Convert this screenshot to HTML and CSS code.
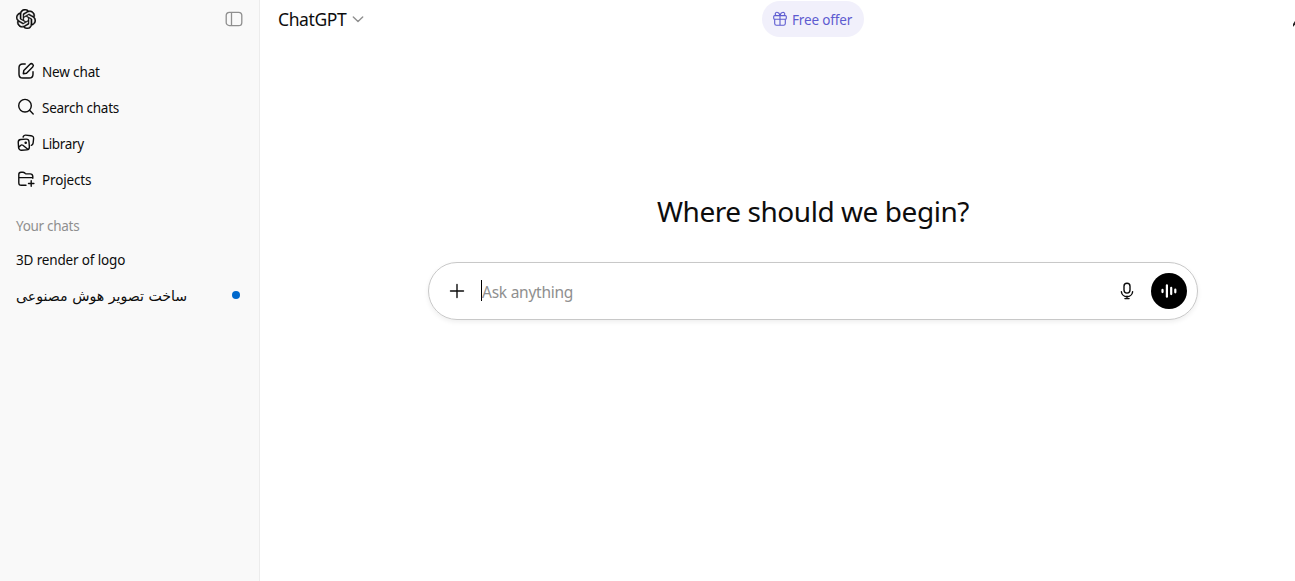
FILE: index.html
```html
<!DOCTYPE html>
<html lang="en">
<head>
    <meta charset="UTF-8">
    <title>ChatGPT</title>
    <link rel="stylesheet" href="styles.css">
</head>
<body>
    <!-- Sidebar -->
    <aside class="sidebar">
        <div class="sidebar-header">
            <svg class="logo" width="20" height="20" viewBox="0 0 24 24" fill="currentColor"><path d="M22.2819 9.8211a5.9847 5.9847 0 0 0-.5157-4.9108 6.0462 6.0462 0 0 0-6.5098-2.9A6.0651 6.0651 0 0 0 4.9807 4.1818a5.9847 5.9847 0 0 0-3.9977 2.9 6.0462 6.0462 0 0 0 .7427 7.0966 5.98 5.98 0 0 0 .511 4.9107 6.051 6.051 0 0 0 6.5146 2.9001A5.9847 5.9847 0 0 0 13.2599 24a6.0557 6.0557 0 0 0 5.7718-4.2058 5.9894 5.9894 0 0 0 3.9977-2.9001 6.0557 6.0557 0 0 0-.7475-7.0729zm-9.022 12.6081a4.4755 4.4755 0 0 1-2.8764-1.0408l.1419-.0804 4.7783-2.7582a.7948.7948 0 0 0 .3927-.6813v-6.7369l2.02 1.1686a.071.071 0 0 1 .038.052v5.5826a4.504 4.504 0 0 1-4.4945 4.4944zm-9.6607-4.1254a4.4708 4.4708 0 0 1-.5346-3.0137l.142.0852 4.783 2.7582a.7712.7712 0 0 0 .7806 0l5.8428-3.3685v2.3324a.0804.0804 0 0 1-.0332.0615L9.74 19.9502a4.4992 4.4992 0 0 1-6.1408-1.6464zM2.3408 7.8956a4.485 4.485 0 0 1 2.3655-1.9728V11.6a.7664.7664 0 0 0 .3879.6765l5.8144 3.3543-2.0201 1.1685a.0757.0757 0 0 1-.071 0l-4.8303-2.7865A4.504 4.504 0 0 1 2.3408 7.872zm16.5963 3.8558L13.1038 8.364 15.1192 7.2a.0757.0757 0 0 1 .071 0l4.8303 2.7913a4.4944 4.4944 0 0 1-.6765 8.1042v-5.6772a.79.79 0 0 0-.407-.667zm2.0107-3.0231l-.142-.0852-4.7735-2.7818a.7759.7759 0 0 0-.7854 0L9.409 9.2297V6.8974a.0662.0662 0 0 1 .0284-.0615l4.8303-2.7866a4.4992 4.4992 0 0 1 6.6802 4.66zM8.3065 12.863l-2.02-1.1638a.0804.0804 0 0 1-.038-.0567V6.0742a4.4992 4.4992 0 0 1 7.3757-3.4537l-.142.0805L8.704 5.459a.7948.7948 0 0 0-.3927.6813zm1.0976-2.3654l2.602-1.4998 2.6069 1.4998v2.9994l-2.5974 1.4997-2.6067-1.4997Z"/></svg>
            <svg class="toggle" width="20" height="20" viewBox="0 0 20 20" fill="none" stroke="currentColor" stroke-width="1.3"><rect x="2.2" y="3.4" width="15.6" height="13.2" rx="3.2"/><path d="M7.5 3.4v13.2"/></svg>
        </div>

        <nav class="menu">
            <a class="menu-item">
                <svg width="20" height="20" viewBox="0 0 20 20" fill="none" stroke="currentColor" stroke-width="1.45" stroke-linecap="round" stroke-linejoin="round"><path d="M9.2 3H6.8Q3 3 3 6.8v6.4Q3 17 6.8 17h6.4q3.8 0 3.8-3.8v-2.4"/><path d="M7.3 12.7l.5-3.2 6.2-6.2a1.9 1.9 0 0 1 2.7 2.7l-6.2 6.2z"/></svg>
                <span>New chat</span>
            </a>
            <a class="menu-item">
                <svg width="20" height="20" viewBox="0 0 20 20" fill="none" stroke="currentColor" stroke-width="1.4" stroke-linecap="round"><circle cx="9" cy="8.7" r="6.3"/><path d="M13.6 13.3l3.6 3.6"/></svg>
                <span class="search">Search chats</span>
            </a>
            <a class="menu-item">
                <svg width="20" height="20" viewBox="0 0 20 20" fill="none" stroke="currentColor" stroke-width="1.4" stroke-linecap="round" stroke-linejoin="round"><path d="M7.1 4.1l.3-.7Q8 2 9.6 2.1l5.4.6q2.900.3 2.600 3.100l-.5 4.300q-.2 1.700-1.800 2.200"/><rect x="2.4" y="6.3" width="10.8" height="10.8" rx="2.8" transform="rotate(-4 7.8 11.7)"/><path d="M2.900 14.100l1.700-1.700q1.100-1 2.300-.1l4.900 4"/><circle cx="9.700" cy="9.700" r=".6" fill="currentColor"/></svg>
                <span class="library">Library</span>
            </a>
            <a class="menu-item">
                <svg width="20" height="20" viewBox="0 0 20 20" fill="none" stroke="currentColor" stroke-width="1.4" stroke-linecap="round" stroke-linejoin="round"><path d="M10 16.300H5.300q-2.500 0-2.500-2.500V5.500q0-2.200 2.200-2.200h2q.9 0 1.600.6l.7.6q.5.400 1.300.400h3.600q2.400 0 2.600 2.500v1.800M2.800 8.600h14M15.200 11.800v5.400M12.500 14.500h5.400"/></svg>
                <span>Projects</span>
            </a>
        </nav>

        <h2 class="section-title">Your chats</h2>
        <div class="chat-item"><span class="chat-name">3D render of logo</span></div>
        <div class="chat-item">
            <span class="chat-name fa" lang="fa" dir="rtl">ساخت تصویر هوش مصنوعی</span>
            <span class="dot"></span>
        </div>
    </aside>

    <!-- Main area -->
    <main class="main">
        <header class="topbar">
            <div class="model">
                <span>ChatGPT</span>
                <svg width="14" height="14" viewBox="0 0 14 14" fill="none" stroke="currentColor" stroke-width="1.4" stroke-linecap="round" stroke-linejoin="round"><path d="M2.300 4.900L7 9.500l4.700-4.600"/></svg>
            </div>
            <div class="offer">
                <svg width="16" height="16" viewBox="0 0 16 16" fill="none" stroke="currentColor" stroke-width="1.1" stroke-linejoin="round"><rect x="1.700" y="4.600" width="12.600" height="3.600" rx="1"/><path d="M2.700 8.200v4.300q0 1.800 1.800 1.800h7q1.800 0 1.800-1.800V8.200M8 4.600v9.700M8 4.500C7.400 2.300 6.600 1.500 5.500 1.500a1.500 1.500 0 0 0-1.300 3M8 4.500c.6-2.200 1.400-3 2.500-3a1.500 1.500 0 0 1 1.300 3"/></svg>
                <span>Free offer</span>
            </div>
            <svg class="edge-icon" width="2" height="6" viewBox="0 0 2 6"><path d="M2 0v3.500L.5 5.500H0V3z" fill="#222"/></svg>
        </header>

        <div class="content">
            <h1 class="greeting">Where should we begin?</h1>

            <div class="composer">
                <svg class="plus" width="20" height="20" viewBox="0 0 20 20" fill="none" stroke="currentColor" stroke-width="1.4" stroke-linecap="round"><path d="M10 3.500v13M3.500 10h13"/></svg>
                <div class="field"><span class="caret"></span><span class="placeholder">Ask anything</span></div>
                <svg class="mic" width="20" height="20" viewBox="0 0 20 20" fill="none" stroke="currentColor" stroke-width="1.4" stroke-linecap="round"><rect x="7" y="2.300" width="6" height="9.800" rx="3"/><path d="M4.400 10.800a5.650 5.650 0 0 0 11.200 0M10 15.300v2.200M7.900 17.600h4.200"/></svg>
                <button class="voice">
                    <svg width="20" height="20" viewBox="0 0 20 20" fill="none" stroke="currentColor" stroke-width="2.2" stroke-linecap="round"><path d="M3.500 8.900v2.200M7.900 4.300v11.400M12.200 6.900v6.200M16.300 8.700v2.600"/></svg>
                </button>
            </div>
        </div>
    </main>
</body>
</html>
```
FILE: styles.css
```css
* {
    box-sizing: border-box;
}
body {
    margin: 0;
    height: 581px;
    display: flex;
    background: #fff;
    color: #0d0d0d;
    font-family: "Noto Sans", "Open Sans", sans-serif;
    font-size: 13.5px;
    letter-spacing: -0.15px;
}
svg {
    display: block;
    flex: none;
}

/* Sidebar */
.sidebar {
    width: 260px;
    flex: none;
    background: #f9f9f9;
    border-right: 1px solid #ececec;
}
.sidebar-header {
    display: flex;
    justify-content: space-between;
    padding: 9px 15px 0 16px;
    height: 54px;
}
.logo {
    stroke: currentColor;
    stroke-width: 0.4;
}
.toggle {
    color: #8f8f8f;
}
.menu-item {
    display: flex;
    align-items: center;
    gap: 6px;
    height: 36px;
    padding: 0 16px;
}
.menu-item svg {
    margin-top: -2px;
}
.menu-item span, .chat-name {
    white-space: nowrap;
}
.search {
    letter-spacing: -0.25px;
}
.library {
    letter-spacing: -0.35px;
}
.section-title {
    margin: 15px 16px 3px;
    height: 26px;
    line-height: 26px;
    font-size: 13.5px;
    font-weight: 400;
    letter-spacing: -0.3px;
    color: #8f8f8f;
}
.chat-item {
    display: flex;
    align-items: center;
    justify-content: space-between;
    height: 36px;
    padding: 0 19px 0 16px;
}
.fa {
    font-family: "DejaVu Sans", sans-serif;
    font-size: 14.15px;
    letter-spacing: 0;
}
.dot {
    width: 8px;
    height: 8px;
    margin-top: -2px;
    border-radius: 50%;
    background: #0169cc;
}

/* Main area */
.main {
    flex: 1;
}
.topbar {
    height: 38px;
    display: grid;
    grid-template-columns: 502px 102px 1fr;
    align-items: center;
}
.model {
    display: flex;
    align-items: center;
    gap: 5px;
    padding-left: 18px;
    font-size: 17.5px;
    letter-spacing: -0.4px;
}
.model svg {
    color: #8f8f8f;
}
.offer {
    display: flex;
    align-items: center;
    gap: 4px;
    height: 36px;
    padding-left: 10px;
    border-radius: 18px;
    background: #f1f0fb;
    color: #5d5bd0;
    white-space: nowrap;
}
.offer span {
    margin-top: 2px;
}
.edge-icon {
    justify-self: end;
    margin-top: 9px;
}
.content {
    padding-left: 71px;
}
.greeting {
    margin: 152px 0 0;
    height: 42px;
    line-height: 42px;
    text-align: center;
    font-size: 28px;
    font-weight: 400;
    letter-spacing: -0.45px;
}
.composer {
    display: flex;
    align-items: center;
    width: 770px;
    height: 58px;
    margin: 30px auto 0;
    padding: 0 10px 0 18px;
    border: 1px solid #c8c8c8;
    border-radius: 29px;
    box-shadow: 0 2px 5px rgba(0,0,0,0.07);
}
.field {
    flex: 1;
    display: flex;
    align-items: center;
    margin-left: 14px;
}
.caret {
    width: 1px;
    height: 21px;
    margin-top: -1px;
    background: #000;
}
.placeholder {
    color: #8f8f8f;
    font-size: 15.5px;
    letter-spacing: -0.25px;
    margin-top: 2px;
}
.mic {
    margin-right: 14px;
}
.voice {
    display: flex;
    align-items: center;
    justify-content: center;
    width: 36px;
    height: 36px;
    padding: 0;
    border: none;
    border-radius: 50%;
    background: #000;
    color: #fff;
}
```
